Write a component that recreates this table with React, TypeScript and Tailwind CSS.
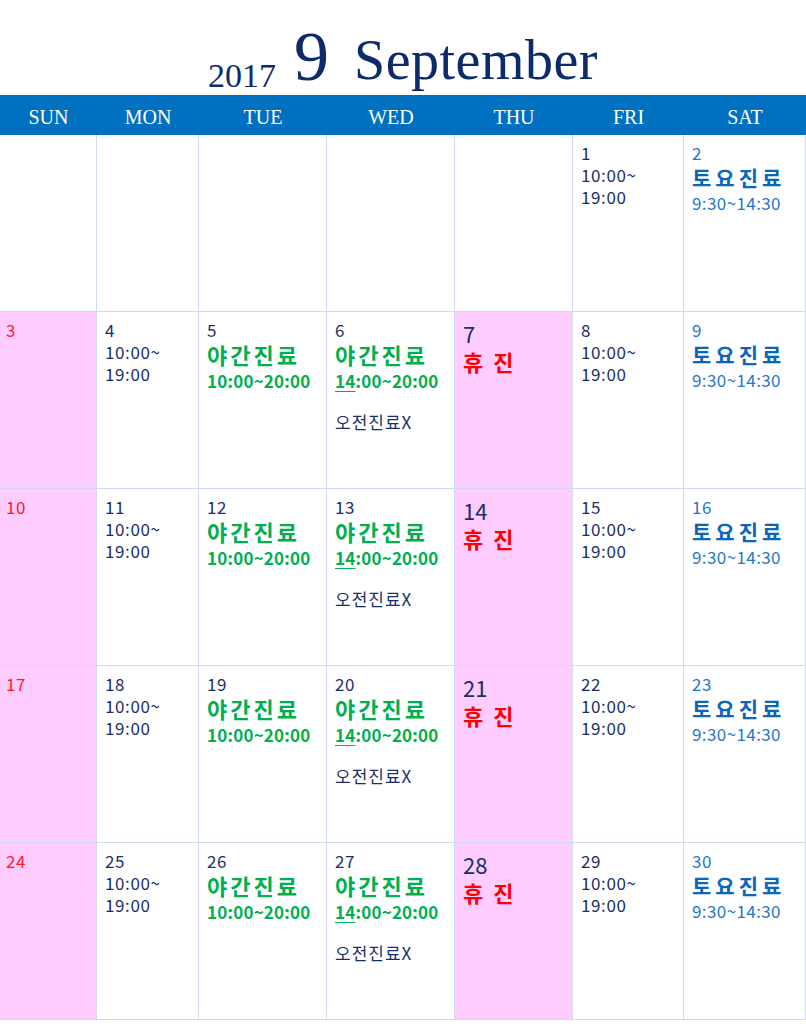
import React from 'react';

const days = ['SUN', 'MON', 'TUE', 'WED', 'THU', 'FRI', 'SAT'];

type Cell = { day?: number; col: number };

const weeks: (number | null)[][] = [
  [null, null, null, null, null, 1, 2],
  [3, 4, 5, 6, 7, 8, 9],
  [10, 11, 12, 13, 14, 15, 16],
  [17, 18, 19, 20, 21, 22, 23],
  [24, 25, 26, 27, 28, 29, 30],
];

const font = { fontFamily: '"Noto Sans CJK KR", "Noto Sans", sans-serif' };

function DayCell({ day, col }: Cell) {
  const pink = day != null && (col === 0 || col === 4);
  const base = `h-[177px] border-r border-b border-[#cfdcef] pt-[7px] ${col === 0 ? 'pl-[6px]' : 'pl-[8px]'} ${pink ? 'bg-[#ffccff]' : 'bg-white'}`;
  if (day == null) return <div className={base} />;

  // Sunday
  if (col === 0) {
    return (
      <div className={base}>
        <div className="text-[17px] leading-[22px] tracking-[0.5px] text-[#ff1a1a]">{day}</div>
      </div>
    );
  }
  // Thursday: closed
  if (col === 4) {
    return (
      <div className={base}>
        <div className="text-[22px] leading-[28px] text-[#1b2f66]">{day}</div>
        <div className="flex gap-[10px] text-[22px] leading-[28px] font-bold text-[#ff0000]">
          <span>휴</span>
          <span>진</span>
        </div>
      </div>
    );
  }
  // Tue / Wed: night clinic
  if (col === 2 || col === 3) {
    return (
      <div className={base}>
        <div className="text-[17px] leading-[22px] tracking-[0.5px] text-[#1b2f66]">{day}</div>
        <div className="text-[22px] leading-[26px] font-bold text-[#00b050] tracking-[3px]">야간진료</div>
        <div className="text-[17px] leading-[28px] font-bold text-[#00b050] tracking-[0.2px]">
          {col === 3 ? (
            <>
              <span className="underline underline-offset-[3px]">14</span>:00~20:00
            </>
          ) : (
            '10:00~20:00'
          )}
        </div>
        {col === 3 && (
          <div className="mt-[16px] text-[17px] leading-[22px] tracking-[1px] text-[#1b2f66]">오전진료X</div>
        )}
      </div>
    );
  }
  // Saturday
  if (col === 6) {
    return (
      <div className={base}>
        <div className="text-[17px] leading-[22px] tracking-[0.5px] text-[#1f78c8]">{day}</div>
        <div className="text-[21px] leading-[26px] font-bold text-[#0a66b8] tracking-[4px]">토요진료</div>
        <div className="text-[17px] leading-[26px] tracking-[0.4px] text-[#1f78c8]">9:30~14:30</div>
      </div>
    );
  }
  // Mon / Fri
  return (
    <div className={base}>
      <div className="text-[17px] leading-[22px] tracking-[0.5px] text-[#1b2f66]">{day}</div>
      <div className="text-[17px] leading-[22px] tracking-[0.6px] text-[#1b2f66]">10:00~</div>
      <div className="text-[17px] leading-[22px] tracking-[0.6px] text-[#1b2f66]">19:00</div>
    </div>
  );
}

export default function App() {
  return (
    <div className="w-[806px] bg-white" style={font}>
      {/* Title */}
      <div
        className="h-[95px] flex items-end justify-center text-[#0d2a6b]"
        style={{ fontFamily: '"Liberation Serif", "DejaVu Serif", serif' }}
      >
        <span className="text-[34px] leading-[40px] mb-[-1px]">2017</span>
        <span className="text-[70px] leading-[80px] ml-[18px] mb-[-2px]">9</span>
        <span className="text-[56px] leading-[68px] ml-[25px] tracking-[0.5px] mb-[1px]">September</span>
      </div>

      <div className="grid grid-cols-[97px_102px_128px_128px_118px_111px_122px]">
        {days.map((d) => (
          <div
            key={d}
            className="h-[40px] pt-[3px] bg-[#0070c0] text-white flex items-center justify-center text-[20px]"
            style={{ fontFamily: '"Liberation Serif", serif' }}
          >
            {d}
          </div>
        ))}
        {weeks.map((w, wi) =>
          w.map((d, ci) => <DayCell key={`${wi}-${ci}`} day={d ?? undefined} col={ci} />)
        )}
      </div>
    </div>
  );
}
